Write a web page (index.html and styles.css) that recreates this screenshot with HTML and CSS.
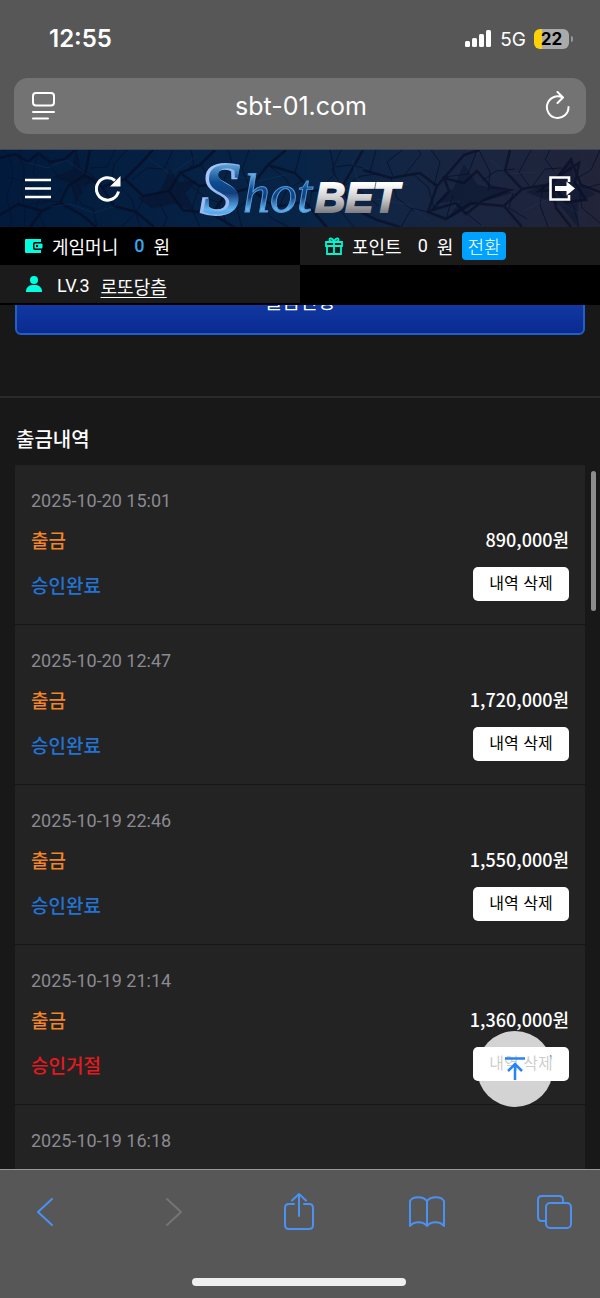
FILE: index.html
```html
<!DOCTYPE html>
<html lang="ko">
<head>
    <meta charset="UTF-8">
    <meta name="viewport" content="width=device-width, initial-scale=1.0">
    <title>출금내역</title>
    <link rel="stylesheet" href="styles.css">
</head>
<body>
    <div class="browser-top">
        <div class="status-bar">
            <span class="clock">12:55</span>
            <div class="status-right">
                <svg width="28" height="20" viewBox="0 0 28 20" fill="#fff">
                    <rect x="1" y="12" width="5" height="6" rx="1.5"/>
                    <rect x="8" y="9" width="5" height="9" rx="1.5"/>
                    <rect x="15" y="5" width="5" height="13" rx="1.5"/>
                    <rect x="22" y="1" width="5" height="17" rx="1.5"/>
                </svg>
                <span class="network">5G</span>
                <span class="battery">22</span>
            </div>
        </div>
        <div class="address-bar">
            <button class="icon-btn" aria-label="페이지 메뉴">
                <svg width="26" height="30" viewBox="0 0 26 30" fill="none" stroke="#fff" stroke-width="2" stroke-linecap="round">
                    <rect x="2" y="2" width="21" height="12.500" rx="3"/>
                    <path d="M2 21h21M2 27.500h15"/>
                </svg>
            </button>
            <input class="address" type="text" aria-label="주소" value="sbt-01.com">
            <button class="icon-btn" aria-label="새로 고침">
                <svg width="26" height="30" viewBox="0 0 26 30" fill="none" stroke="#fff" stroke-width="2" stroke-linecap="round" stroke-linejoin="round">
                    <path d="M23.500 16A10.800 10.800 0 1 1 17.500 6.500M12.500 1l5.500 5.500-5.500 5.500"/>
                </svg>
            </button>
        </div>
    </div>

    <header class="site-header">
        <svg class="header-bg" viewBox="0 0 600 77" preserveAspectRatio="xMidYMid slice" fill="none" aria-hidden="true">
            <defs>
                <linearGradient id="sky">
                    <stop offset="0" stop-color="#021b3c"/>
                    <stop offset=".5" stop-color="#072447"/>
                    <stop offset=".75" stop-color="#182541"/>
                    <stop offset="1" stop-color="#222439"/>
                </linearGradient>
            </defs>
            <rect width="600" height="77" fill="url(#sky)"/>
            <g fill="#08132c" stroke="#08132c">
                <path d="M76 0l4 18 20 13-18 4-6 18-5-20-17-6 19-7zM138 48l22-6 10-22 9 13 18-2-12 12 9 17-20-7-22 5z" opacity=".55"/>
                <path d="M464 15l13 20 34 8-35 10-27 15 12-18-25 3 18-15zM527 42l25-9 18-22 5 22 20 11-17 8-1 24-16-21z" opacity=".45"/>
            </g>
            <g stroke="#080d24" stroke-width="2.500" opacity=".65">
                <path d="M0 8l15-4 13 8 10-9 12 9 15-3 10-9M0 65l18-11 24 7 18-8 22 12 14 12M42 61l-12 16M60 53l8-17 17-11 5-25M85 25l17 12 23-8 19-19 9-10M102 37l12 19 22 6 18 15M125 29l18 17 26-5 11-18 20-8 15-15M169 41l14 19 29 4 22 13M180 23l19 13 22-2M212 64l13-19 25-7 18-23 18-15M250 38l24 19 31-5 22 25M268 15l27 8 17 18 30-4 21-37M342 37l10 21 25 12 23 7M363 20l28 8 29-5 17 13 27-31 15-5M437 36l-9 26 18 7 25-16 33 3 18-17 30-5 20-26M504 56l18 21M522 39l-17-18 5-21M552 34l4 24 15 19M571 10l10 25 19 7"/>
                <path d="M477 21l14 16 19 3-26 10-18 14-10-11-24 7 17-19-5-13 20 5zM579 13l-4 20 11 17-20 2-10-12-17 1 17-13z"/>
            </g>
            <g stroke="#07142f" opacity=".9">
                <path d="M3 0c11 12 12 24 6 39s6 23 1 38M19 0c-2 13 9 15 4 29s5 25 1 48M38 3l-5 20 11 15-8 20 9 19M8 27l20 5 14 18 17 2M48 12l11 16 17 4 6 12M62 38l-14 14-20 2M72 38l10 17 11 4 4 18M90 18l17-1 8-17M92 26l-16 24M112 30l2-16 13-14M117 33l15 17 8 27M132 30l15-12 17 1 9-19M145 46l-9 17-15 14M155 44l12 24-4 9M183 23l11-9-3-14M184 30l22 18 12 4 8 20M199 37l-7 22 8 18M222 34l10-22-4-12M225 46l-14-12-10-20M250 38l-8-19 7-19"/>
                <path d="M255 43l-18 16 5 18M258 44l13 24 18 9M268 15l18 14 10 20M295 23l6-23M303 30l-17 11-6 14M312 41l-3 16 16 20M321 38l14-14-5-24M342 37l-10-17 9-20M342 37l19-11 16-2M342 37l19 5 18 14M342 37l-3 22 15 18M363 18l-13-3-15 2M370 22l6-22M393 26l-6-14 15-12M391 28l6 20 17 13M404 26l17-22-3-4M413 24l15 13 7 24M434 36l6-24-9-12M444 27l24-3 9-24M428 62l-16-4-11 19M446 69l7-24M459 57l22 18M482 31l14-10 19-2M488 41l2-19-11-22M513 43l-4 15 18 11M530 37l-11-15 12-22M532 37l13-18 17-1M543 36l-3 19 8 22M552 34l22 23 5 20M554 21l-9-12 5-9M574 30l17-10 9-20M579 38l3 20 18 15M586 38l14-4"/>
            </g>
            <path d="M25 12l23 6 18-8 25 17M50 57l20-3 24 9 21-7M148 8l22 16 27-18M236 26l22 5 27-6M353 10l4 19 22 9 30-4M377 49l33 6 18 15M490 10l18 14 29-2M523 61l28-13 31 17" stroke="#28517c" opacity=".2"/>
        </svg>
        <div class="header-left">
            <button class="icon-btn" aria-label="메뉴">
                <svg width="26" height="26" viewBox="0 0 26 26" stroke="#fff" stroke-width="2.600">
                    <path d="M0 4h26M0 12.500h26M0 21h26"/>
                </svg>
            </button>
            <button class="icon-btn" aria-label="새로고침">
                <svg width="26" height="26" viewBox="0 0 26 26">
                    <path d="M23.500 15.500A11.200 11.200 0 1 1 20 4.500" fill="none" stroke="#fff" stroke-width="3"/>
                    <path d="M25.500 0v10.500H15z" fill="#fff"/>
                </svg>
            </button>
        </div>
        <a class="logo" href="#" aria-label="ShotBET">
            <svg width="224" height="77" viewBox="0 0 224 77">
                <defs>
                    <linearGradient id="blue" x2="0" y2="1">
                        <stop offset=".1" stop-color="#85c9f5"/>
                        <stop offset=".42" stop-color="#0b4c91"/>
                        <stop offset=".55" stop-color="#123e7b"/>
                        <stop offset=".75" stop-color="#5fb5f3"/>
                        <stop offset="1" stop-color="#3177ba"/>
                    </linearGradient>
                    <linearGradient id="rim" x2="1" y2="1">
                        <stop offset="0" stop-color="#c7d4ff"/>
                        <stop offset=".5" stop-color="#8fb5ef"/>
                        <stop offset="1" stop-color="#b9c5f7"/>
                    </linearGradient>
                    <linearGradient id="silver" x2="0" y2="1">
                        <stop offset=".2" stop-color="#fff"/>
                        <stop offset=".5" stop-color="#d1d0d1"/>
                        <stop offset=".85" stop-color="#77777c"/>
                    </linearGradient>
                </defs>
                <text class="logo-s" x="12" y="64" fill="url(#rim)" stroke="url(#rim)" stroke-width="3">S</text>
                <text class="logo-s" x="14" y="64" fill="url(#blue)">S</text>
                <text class="logo-hot" x="55" y="62" fill="url(#blue)" stroke="#5798d8" stroke-width="1">hot</text>
                <text class="logo-bet" x="127" y="62" fill="url(#silver)" stroke="url(#silver)" stroke-width="2">BET</text>
            </svg>
        </a>
        <button class="icon-btn" aria-label="로그아웃">
            <svg width="26" height="28" viewBox="0 0 26 28">
                <path d="M20 7V2.500H1.500v22H20V20" fill="none" stroke="#fff" stroke-width="2.600"/>
                <path d="M6 11h11.500V6.500l8.500 7-8.500 7V16H6z" fill="#fff"/>
            </svg>
        </button>
    </header>

    <section class="user-info">
        <div class="info-cell">
            <svg width="18" height="16" viewBox="0 0 18 16">
                <path d="M1 1h15v3h-6q-2 0-2 2v4q0 2 2 2h6v3H1q-1 0-1-1V2q0-1 1-1z" fill="#00ffe1"/>
                <rect x="9.500" y="5.500" width="8" height="5" rx="1" fill="#00ffe1"/>
                <circle cx="12" cy="8" r="1.200"/>
            </svg>
            <span>게임머니</span>
            <span class="amount money">0</span>
            <span>원</span>
        </div>
        <div class="info-cell raised">
            <svg width="18" height="18" viewBox="0 0 18 18" fill="none" stroke="#00f5d0" stroke-width="1.800">
                <path d="M1 5h16v4H1zM2 9v8h14V9M9 5v12M9 5C6 5 4 4 4.500 2.200S8 1.500 9 5c1-3.500 4-4.600 4.500-2.800S12 5 9 5"/>
            </svg>
            <span>포인트</span>
            <span class="amount">0</span>
            <span>원</span>
            <button class="convert">전환</button>
        </div>
        <div class="info-cell raised">
            <svg width="18" height="18" viewBox="0 0 18 18" fill="#00ffe1">
                <circle cx="9" cy="5" r="4"/>
                <path d="M1 17v-1c0-3 3-6 6-6h4c3 0 6 3 6 6v1z"/>
            </svg>
            <span class="level">LV.3</span>
            <a class="nickname" href="#">로또당츰</a>
        </div>
    </section>

    <div class="page">
        <main class="content">
            <div class="withdraw-form">
                <button class="withdraw">출금신청</button>
            </div>
            <h1>출금내역</h1>
            <ul class="history">
                <li class="entry">
                    <time>2025-10-20 15:01</time>
                    <div class="row"><span class="kind">출금</span><span class="price">890,000원</span></div>
                    <div class="row"><span class="approved">승인완료</span><button class="delete">내역 삭제</button></div>
                </li>
                <li class="entry">
                    <time>2025-10-20 12:47</time>
                    <div class="row"><span class="kind">출금</span><span class="price">1,720,000원</span></div>
                    <div class="row"><span class="approved">승인완료</span><button class="delete">내역 삭제</button></div>
                </li>
                <li class="entry">
                    <time>2025-10-19 22:46</time>
                    <div class="row"><span class="kind">출금</span><span class="price">1,550,000원</span></div>
                    <div class="row"><span class="approved">승인완료</span><button class="delete">내역 삭제</button></div>
                </li>
                <li class="entry">
                    <time>2025-10-19 21:14</time>
                    <div class="row"><span class="kind">출금</span><span class="price">1,360,000원</span></div>
                    <div class="row"><span class="rejected">승인거절</span><button class="delete">내역 삭제</button></div>
                </li>
                <li class="entry">
                    <time>2025-10-19 16:18</time>
                </li>
            </ul>
        </main>
        <div class="scroll-thumb"></div>
        <button class="to-top" aria-label="맨 위로">
            <svg width="22" height="24" viewBox="0 0 22 24" fill="none" stroke="#2684f5" stroke-width="2.500">
                <path d="M1 1.500h20M11 23V7M4 14L11 7l7 7"/>
            </svg>
        </button>
    </div>

    <nav class="toolbar">
        <div class="tools">
            <button class="icon-btn" aria-label="뒤로">
                <svg width="38" height="40" viewBox="0 0 38 40"><path d="M27 7L13 20l14 13"/></svg>
            </button>
            <button class="icon-btn" aria-label="앞으로" disabled>
                <svg width="38" height="40" viewBox="0 0 38 40"><path d="M14 7l14 13-14 13"/></svg>
            </button>
            <button class="icon-btn" aria-label="공유">
                <svg width="38" height="40" viewBox="0 0 38 40"><path d="M14 12H9q-4 0-4 4v17q0 4 4 4h20q4 0 4-4V16q0-4-4-4h-5M19 24V2M12 8.500L19 2l7 6.500"/></svg>
            </button>
            <button class="icon-btn" aria-label="책갈피">
                <svg width="38" height="40" viewBox="0 0 38 40"><path d="M19 9C15 4 5 4 2 9v25c4-5 13-5 17 0 4-5 13-5 17 0V9c-3-5-13-5-17 0zM19 9v25"/></svg>
            </button>
            <button class="icon-btn" aria-label="탭">
                <svg width="38" height="40" viewBox="0 0 38 40"><path d="M10 29H7q-4 0-4-4V8q0-4 4-4h17q4 0 4 4v3"/><rect x="11" y="11" width="25" height="25" rx="4"/></svg>
            </button>
        </div>
        <div class="home-bar"></div>
    </nav>
</body>
</html>
```

FILE: styles.css
```css
* { box-sizing: border-box; }
body {
    margin: 0;
    height: 100vh;
    display: flex;
    flex-direction: column;
    background-color: #181818;
    color: #fff;
    font-family: Roboto, "Noto Sans CJK KR", sans-serif;
    font-size: 18px;
}
button {
    font-family: inherit;
    border: none;
    cursor: pointer;
}
svg { display: block; flex-shrink: 0; }
.icon-btn { padding: 0; background: none; }

/* browser top */
.browser-top {
    background-color: #575757;
    padding: 0 14px 15px;
    border-bottom: 1px solid #3c4655;
    font-family: Inter, sans-serif;
}
.status-bar {
    height: 78px;
    padding: 0 13px 0 35px;
    display: flex;
    align-items: center;
    justify-content: space-between;
}
.clock { font-size: 24px; font-weight: 600; line-height: 24px; }
.status-right { display: flex; align-items: center; gap: 8px; }
.network { font-size: 19px; }
.battery {
    position: relative;
    width: 35px;
    margin-right: 4px;
    border-radius: 6px;
    background: linear-gradient(90deg, #fcd20a 8px, #aaa 8px);
    color: #000;
    font-size: 17px;
    font-weight: 700;
    line-height: 20px;
    text-align: center;
}
.battery::after {
    content: "";
    position: absolute;
    right: -4px;
    top: 7px;
    width: 2px;
    height: 6px;
    border-radius: 0 2px 2px 0;
    background-color: #999;
}
.address-bar {
    height: 56px;
    padding: 0 15px 0 17px;
    display: flex;
    align-items: center;
    border-radius: 14px;
    background-color: #737373;
}
.address {
    flex: 1;
    min-width: 0;
    border: none;
    background: none;
    color: #fff;
    font-family: inherit;
    font-size: 25px;
    text-align: center;
}

/* site header */
.site-header {
    position: relative;
    height: 77px;
    padding: 0 25px;
    display: grid;
    grid-template-columns: 1fr auto 1fr;
    align-items: center;
    justify-items: end;
}
.header-bg {
    position: absolute;
    inset: 0;
    width: 100%;
    height: 100%;
    z-index: -1;
}
.header-left { display: flex; gap: 44px; justify-self: start; }
.logo-s { font: italic bold 74px "Liberation Serif", serif; }
.logo-hot { font: italic 54px "Liberation Serif", serif; }
.logo-bet { font: italic bold 42px "Liberation Sans", sans-serif; }

.user-info {
    display: grid;
    grid-template-columns: 1fr 1fr;
    grid-template-rows: 38px 38px;
    padding-bottom: 2px;
    background-color: #000;
    font-family: "Noto Sans CJK KR", sans-serif;
    line-height: 26px;
}
.info-cell {
    padding: 0 25px 1px;
    display: flex;
    align-items: center;
    gap: 9px;
    white-space: nowrap;
}
.raised { background-color: #1b1b1b; }
.amount { margin-left: 7px; font-family: Roboto, sans-serif; }
.money { color: #35a7ed; font-weight: 500; }
.convert {
    height: 28px;
    padding: 0 5px;
    border-radius: 4px;
    background-color: #00a2ff;
    color: #fff;
    font-size: 18px;
    font-weight: 300;
    line-height: 26px;
}
.level, .nickname { padding-top: 4px; }
.level { margin: 0 2px 0 5px; font-family: Roboto, sans-serif; }
.nickname { color: #fff; text-underline-offset: 3px; }

/* page */
.page {
    position: relative;
    flex: 1;
    min-height: 0;
}
.content {
    height: 100%;
    overflow: hidden;
    font-family: "Noto Sans CJK KR", sans-serif;
}
.withdraw-form {
    margin-top: -30px;
    padding: 0 15px 61px;
    border-bottom: 2px solid #2a2a2a;
}
.withdraw {
    display: block;
    width: 100%;
    height: 60px;
    padding: 0 0 9px;
    border: 2px solid #2260c8;
    border-radius: 6px;
    background: linear-gradient(#1746b0, #0a2a91);
    color: #fff;
    font-size: 19px;
}
h1 {
    margin: 0;
    padding: 25px 16px 11px;
    font-size: 20px;
    font-weight: 500;
    line-height: 31px;
}
.history {
    list-style: none;
    margin: 0 15px;
    padding: 0;
}
.entry {
    height: 160px;
    padding: 21px 16px 0;
    border-bottom: 1px solid #161616;
    background-color: #232323;
}
.entry time {
    display: block;
    color: #8b8a91;
    font-family: Roboto, sans-serif;
    line-height: 30px;
}
.row {
    height: 46px;
    display: flex;
    align-items: center;
    justify-content: space-between;
    font-size: 19px;
    font-weight: 500;
}
.row + .row { height: 44px; }
.kind { color: #f38527; }
.price { font-size: 18px; }
.approved { color: #2373d5; }
.rejected { color: #e5191e; }
.delete {
    width: 96px;
    height: 34px;
    padding: 0 0 4px;
    border-radius: 5px;
    background-color: #fff;
    color: #000;
    font-size: 16px;
}
.scroll-thumb {
    position: absolute;
    top: 166px;
    right: 4px;
    width: 5px;
    height: 140px;
    border-radius: 3px;
    background-color: #8c8c8c;
}
.to-top {
    position: absolute;
    right: 47px;
    bottom: 62px;
    width: 76px;
    height: 76px;
    padding: 0;
    display: grid;
    place-items: center;
    border-radius: 50%;
    background-color: rgba(255, 255, 255, .8);
}

/* browser bottom */
.toolbar {
    padding: 22px 27px 12px 25px;
    border-top: 1px solid #999;
    background-color: #575757;
}
.tools { display: flex; justify-content: space-between; }
.tools svg {
    fill: none;
    stroke: #4b91f4;
    stroke-width: 2;
    stroke-linecap: round;
    stroke-linejoin: round;
}
.tools button:disabled svg { stroke: #747474; }
.home-bar {
    width: 214px;
    height: 8px;
    margin: 46px auto 0;
    border-radius: 4px;
    background-color: #efefef;
}
```
